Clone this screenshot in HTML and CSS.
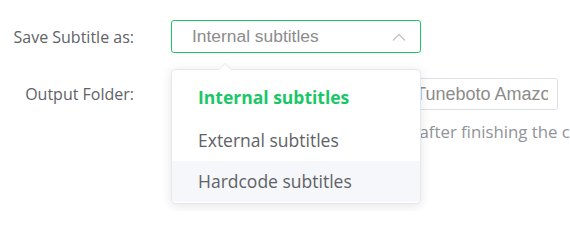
FILE: index.html
```html
<!DOCTYPE html>
<html>
<head>
<meta charset="utf-8">
<link rel="stylesheet" href="styles.css">
</head>
<body>
<div class="form">
  <div class="row row-select">
    <div class="label">Save Subtitle as:</div>
    <div class="select-wrap">
      <div class="select">
        <span class="select-value">Internal subtitles</span>
        <svg class="chevron" width="14" height="8" viewBox="0 0 14 8"><polyline points="1,7.5 7,1.5 13,7.5" fill="none" stroke="#c0c4cc" stroke-width="1.3"/></svg>
      </div>
      <div class="popup">
        <div class="popup-arrow"></div>
        <ul class="menu">
          <li class="item selected">Internal subtitles</li>
          <li class="item">External subtitles</li>
          <li class="item hover">Hardcode subtitles</li>
        </ul>
      </div>
    </div>
  </div>
  <div class="row row-input">
    <div class="label">Output Folder:</div>
    <input class="input" type="text" readonly value="C:\Users\Admin\Documents\Tuneboto Amazon Video Downloader">
  </div>
  <div class="row row-check">
    <div class="label"></div>
    <label class="check"><span class="box"></span><span>Open the output file folder after finishing the conversion</span></label>
  </div>
</div>
</body>
</html>
```
FILE: styles.css
```css
html, body {
  margin: 0;
  padding: 0;
  background: #fff;
  overflow: hidden;
}
body {
  width: 570px;
  height: 211px;
  font-family: "Open Sans", "Liberation Sans", sans-serif;
  color: #606266;
}
.form {
  padding-top: 20px;
}
.row {
  display: flex;
  align-items: center;
  white-space: nowrap;
}
.label {
  width: 134px;
  flex: none;
  text-align: right;
  font-size: 16px;
  margin-right: 37px;
}
.row-select {
  height: 33px;
}
.row-input {
  margin-top: 25px;
  height: 32px;
}
.row-check {
  margin-top: 9px;
  height: 24px;
}
.select-wrap {
  position: relative;
  width: 250px;
  height: 33px;
}
.select {
  box-sizing: border-box;
  height: 33px;
  border: 1px solid #1ac766;
  border-radius: 3px;
  display: flex;
  align-items: center;
  justify-content: space-between;
  padding: 0 14px 0 20px;
}
.select-value {
  font-family: "Liberation Sans", Arial, sans-serif;
  font-size: 17.4px;
  color: #8c8c8c;
}
.chevron {
  display: block;
  margin-top: 1px;
}
.popup {
  position: absolute;
  left: 0;
  top: 49px;
  width: 250px;
  box-sizing: border-box;
  background: #fff;
  border: 1px solid #e4e7ed;
  border-radius: 4px;
  box-shadow: 0 2px 12px 0 rgba(0, 0, 0, 0.1);
  padding: 9px 0 1px;
  z-index: 10;
}
.popup-arrow {
  position: absolute;
  top: -7px;
  left: 46px;
  width: 0;
  height: 0;
  border-left: 7px solid transparent;
  border-right: 7px solid transparent;
  border-bottom: 7px solid #e4e7ed;
}
.popup-arrow::after {
  content: "";
  position: absolute;
  left: -6px;
  top: 1px;
  border-left: 6px solid transparent;
  border-right: 6px solid transparent;
  border-bottom: 6px solid #fff;
}
.menu {
  list-style: none;
  margin: 0;
  padding: 0;
}
.item {
  height: 41px;
  line-height: 41px;
  padding: 0 26px;
  font-size: 17.5px;
  color: #606266;
}
.item.selected {
  color: #1ac766;
  font-weight: 700;
  line-height: 37px;
}
.item.hover {
  background: #f5f7fa;
}
.input {
  box-sizing: border-box;
  width: 387px;
  height: 32px;
  border: 1px solid #dcdfe6;
  border-radius: 3px;
  padding: 0 9px 0 16px;
  font-family: "Liberation Sans", Arial, sans-serif;
  font-size: 18px;
  color: #8c8c8c;
  background: #fff;
  outline: none;
  margin: 0;
}
.check {
  display: flex;
  align-items: center;
  font-size: 16.8px;
  color: #909399;
}
.box {
  width: 16px;
  height: 16px;
  box-sizing: border-box;
  border: 1px solid #dcdfe6;
  border-radius: 2px;
  margin-right: 19px;
  flex: none;
}
```
